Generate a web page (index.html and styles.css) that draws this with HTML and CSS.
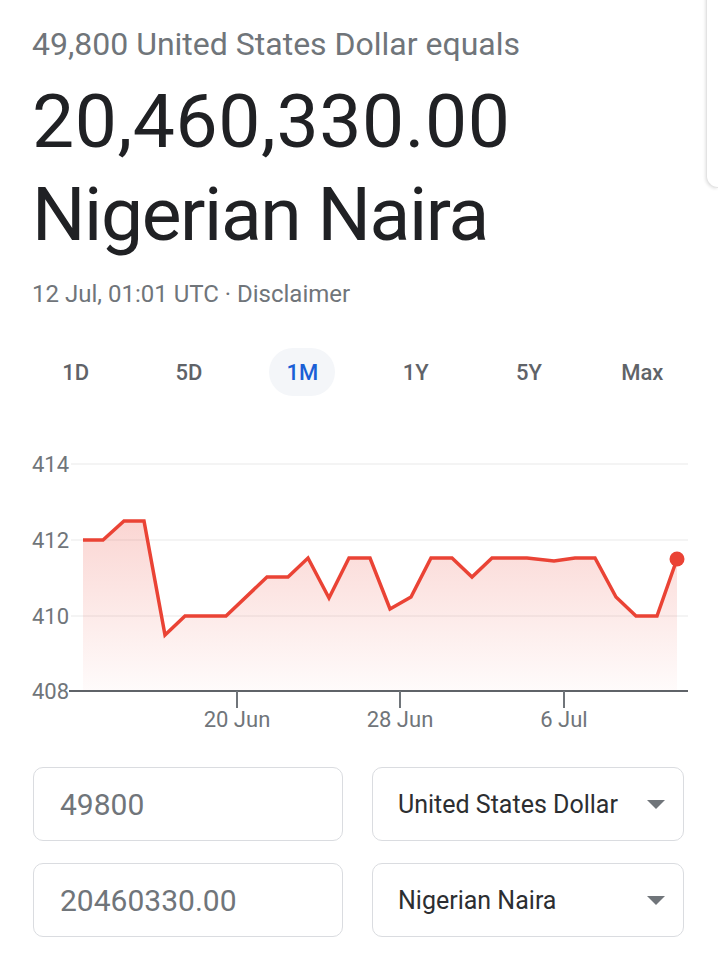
FILE: index.html
```html
<!DOCTYPE html>
<html>
<head>
<meta charset="utf-8">
<link rel="stylesheet" href="styles.css">
</head>
<body>
<div class="page">
  <div class="side-card"></div>
  <div class="header">
    <div class="subtitle">49,800 United States Dollar equals</div>
    <div class="result">
      <div class="result-value">20,460,330.00</div>
      <div class="result-currency">Nigerian Naira</div>
    </div>
    <div class="meta">12 Jul, 01:01 UTC · Disclaimer</div>
  </div>
  <div class="tabs">
    <div class="tab-cell"><span class="tab">1D</span></div>
    <div class="tab-cell"><span class="tab">5D</span></div>
    <div class="tab-cell"><span class="tab active">1M</span></div>
    <div class="tab-cell"><span class="tab">1Y</span></div>
    <div class="tab-cell"><span class="tab">5Y</span></div>
    <div class="tab-cell"><span class="tab">Max</span></div>
  </div>
  <svg class="chart" width="718" height="300" viewBox="0 440 718 300">
    <defs>
      <linearGradient id="fillg" x1="0" y1="0" x2="0" y2="1">
        <stop offset="0" stop-color="#ea4335" stop-opacity="0.22"/>
        <stop offset="1" stop-color="#ea4335" stop-opacity="0.02"/>
      </linearGradient>
    </defs>
    <line class="grid" x1="71" y1="464" x2="688" y2="464"/>
    <line class="grid" x1="71" y1="540" x2="688" y2="540"/>
    <line class="grid" x1="71" y1="616" x2="688" y2="616"/>
    <text class="ylab" x="32" y="472">414</text>
    <text class="ylab" x="32" y="548">412</text>
    <text class="ylab" x="32" y="624">410</text>
    <text class="ylab" x="32" y="699">408</text>
    <path fill="url(#fillg)" d="M83,540 L103,540 L124,521 L144,521 L165,635 L185,616 L226,616 L267,577 L288,577 L308,558 L329,598 L349,558 L370,558 L390,609 L411,597 L431,558 L452,558 L472,577 L492,558 L527,558 L554,561 L575,558 L595,558 L616,597 L636,616 L657,616 L677,559 L677,691 L83,691 Z"/>
    <polyline class="line" points="83,540 103,540 124,521 144,521 165,635 185,616 226,616 267,577 288,577 308,558 329,598 349,558 370,558 390,609 411,597 431,558 452,558 472,577 492,558 527,558 554,561 575,558 595,558 616,597 636,616 657,616 677,559"/>
    <circle cx="677" cy="559" r="7.5" fill="#ea4335"/>
    <line class="axis" x1="69" y1="691" x2="688" y2="691"/>
    <line class="tick" x1="237" y1="691" x2="237" y2="708"/>
    <line class="tick" x1="400" y1="691" x2="400" y2="708"/>
    <line class="tick" x1="564" y1="691" x2="564" y2="708"/>
    <text class="xlab" x="237" y="727">20 Jun</text>
    <text class="xlab" x="400" y="727">28 Jun</text>
    <text class="xlab" x="564" y="727">6 Jul</text>
  </svg>
  <div class="converter">
    <div class="field"><span class="amount">49800</span></div>
    <div class="field select"><span class="currency">United States Dollar</span><span class="caret"></span></div>
    <div class="field"><span class="amount">20460330.00</span></div>
    <div class="field select"><span class="currency">Nigerian Naira</span><span class="caret"></span></div>
  </div>
</div>
</body>
</html>
```
FILE: styles.css
```css
html, body {
  margin: 0;
  padding: 0;
  background: #ffffff;
}
body {
  font-family: Roboto, "Liberation Sans", Arial, sans-serif;
  color: #202124;
  width: 718px;
  height: 953px;
  overflow: hidden;
}
.page {
  position: relative;
  width: 718px;
  height: 953px;
  padding-top: 24px;
  box-sizing: border-box;
  overflow: hidden;
}
.side-card {
  position: absolute;
  left: 706px;
  top: -30px;
  width: 12px;
  height: 218px;
  box-sizing: border-box;
  border: 1px solid #e3e3e3;
  border-right: none;
  border-radius: 18px 0 0 18px;
  box-shadow: -1px 1px 3px rgba(0,0,0,0.10);
  background: #fff;
}
.header {
  padding-left: 32px;
}
.subtitle {
  font-size: 32px;
  line-height: 40px;
  color: #70757a;
  height: 40px;
}
.result {
  margin-top: 11px;
  font-size: 75px;
  line-height: 93px;
  color: #202124;
}
.result-value {
  letter-spacing: 0.6px;
}
.result-currency {
  letter-spacing: -1.4px;
}
.meta {
  margin-top: 18px;
  font-size: 24px;
  line-height: 30px;
  color: #70757a;
}
.tabs {
  display: flex;
  margin: 39px 19px 0 19px;
  height: 48px;
}
.tab-cell {
  flex: 1;
  display: flex;
  justify-content: center;
  align-items: center;
}
.tab {
  display: inline-flex;
  align-items: center;
  height: 48px;
  padding: 0 17px;
  border-radius: 24px;
  font-size: 22px;
  font-weight: 500;
  color: #5f6368;
}
.tab.active {
  background: #f4f6f9;
  color: #1a5fd6;
}
.chart {
  display: block;
  margin-top: 44px;
}
.grid {
  stroke: #f1f1f1;
  stroke-width: 1.5;
}
.axis {
  stroke: #5f6368;
  stroke-width: 2;
}
.tick {
  stroke: #70757a;
  stroke-width: 2;
}
.line {
  fill: none;
  stroke: #ea4335;
  stroke-width: 3.5;
  stroke-linejoin: miter;
}
.ylab {
  font-family: Roboto, "Liberation Sans", Arial, sans-serif;
  font-size: 22px;
  fill: #70757a;
}
.xlab {
  font-family: Roboto, "Liberation Sans", Arial, sans-serif;
  font-size: 22px;
  fill: #70757a;
  text-anchor: middle;
}
.converter {
  display: grid;
  grid-template-columns: 310px 312px;
  column-gap: 29px;
  row-gap: 22px;
  margin: 27px 0 0 33px;
}
.field {
  height: 74px;
  box-sizing: border-box;
  border: 1.5px solid #dadce0;
  border-radius: 10px;
  display: flex;
  align-items: center;
  padding-left: 26px;
}
.field.select {
  justify-content: space-between;
  padding-left: 25px;
  padding-right: 18px;
}
.amount {
  font-size: 30px;
  color: #70757a;
}
.currency {
  font-size: 25px;
  color: #2c2e31;
}
.caret {
  width: 0;
  height: 0;
  border-left: 9px solid transparent;
  border-right: 9px solid transparent;
  border-top: 9px solid #70757a;
}
```
